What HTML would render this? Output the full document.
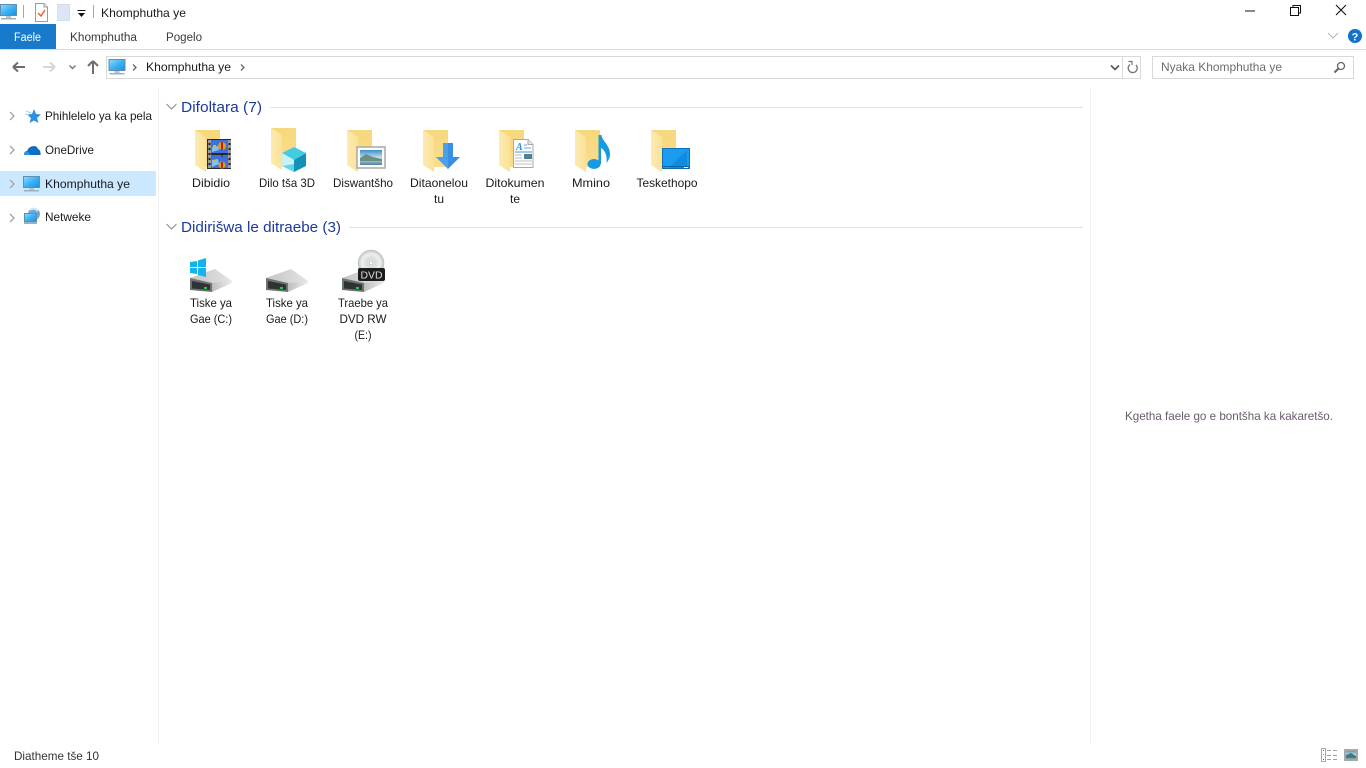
<!DOCTYPE html>
<html><head><meta charset="utf-8"><title>Khomphutha ye</title>
<style>
html,body{margin:0;padding:0;background:#fff;width:1366px;height:768px;overflow:hidden}
svg{display:block;position:absolute;left:0;top:0}
text{font-family:"Liberation Sans",sans-serif;font-size:12px;fill:#1a1a1a}
.c{text-anchor:middle}
.h{font-size:15px;fill:#1c3a9e}
.r{font-size:11.5px;fill:#3a3a3a}
</style></head><body>
<svg width="1366" height="768" viewBox="0 0 1366 768" xmlns="http://www.w3.org/2000/svg">
<defs>
<linearGradient id="fb" x1="0" y1="0" x2="0" y2="1"><stop offset="0" stop-color="#f6d77c"/><stop offset="1" stop-color="#fadf90"/></linearGradient>
<linearGradient id="ff" x1="0" y1="0" x2="1" y2="0"><stop offset="0" stop-color="#fdeab0"/><stop offset="1" stop-color="#fbe29a"/></linearGradient>
<linearGradient id="mon" x1="0" y1="0" x2="1" y2="1"><stop offset="0" stop-color="#8fdcff"/><stop offset=".5" stop-color="#3fb2f2"/><stop offset="1" stop-color="#1a8fe0"/></linearGradient>
<linearGradient id="dt" x1="0" y1="0" x2="1" y2="0"><stop offset="0" stop-color="#c4c4c4"/><stop offset="1" stop-color="#e4e4e4"/></linearGradient>
<linearGradient id="df" x1="0" y1="0" x2="1" y2="0"><stop offset="0" stop-color="#bdbdbd"/><stop offset="1" stop-color="#ededed"/></linearGradient>
<linearGradient id="sky" x1="0" y1="0" x2="0" y2="1"><stop offset="0" stop-color="#3c8fd0"/><stop offset=".55" stop-color="#cfe6ee"/><stop offset="1" stop-color="#4d7f9e"/></linearGradient>
<radialGradient id="cd"><stop offset="0" stop-color="#fff"/><stop offset=".3" stop-color="#d5d8d8"/><stop offset=".7" stop-color="#eef0f0"/><stop offset="1" stop-color="#bfc4c4"/></radialGradient>
<symbol id="folder" width="30" height="44" viewBox="0 0 30 44" overflow="visible">
<path d="M0 0H25V37H11V42L0 35Z" fill="url(#fb)"/>
<path d="M0 0L11 7V42L0 35Z" fill="url(#ff)"/>
</symbol>
<symbol id="pc" width="18" height="17" viewBox="0 0 18 17" overflow="visible">
<rect x=".5" y=".5" width="16" height="11" fill="url(#mon)" stroke="#5e8fb0"/>
<rect x="6" y="12" width="5" height="2" fill="#b3c4d0"/>
<rect x="1" y="14" width="15" height="1.5" fill="#9eb0bc"/>
</symbol>
<symbol id="drive" width="44" height="26" viewBox="0 0 44 26" overflow="visible">
<path d="M0 9L25 0L42 12L22 15Z" fill="url(#dt)"/>
<path d="M22 14L42 12V14L22 23Z" fill="url(#df)"/>
<path d="M0 9L22 14V23L0 21Z" fill="#6f7272"/>
<path d="M2 12L20 15.500V21L2 19.500Z" fill="#2e3334"/>
<rect x="14" y="18" width="3" height="2" fill="#29c24d"/>
</symbol>
</defs>

<!-- Title bar -->
<use href="#pc" x="0" y="4"/>
<rect x="23" y="5" width="1" height="13" fill="#a8a8a8"/>
<path d="M35.500 3.500H44L47.500 7V21.500H35.500Z" fill="#fff" stroke="#9a9a9a"/>
<path d="M44 3.500V7H47.500" fill="#eee" stroke="#9a9a9a"/>
<path d="M38 13L41 16L45 10" fill="none" stroke="#e8622a" stroke-width="1.500"/>
<path d="M57.500 4.500H69.500V20.500H57.500Z" fill="#dce6f4" stroke="#d3dded"/>
<rect x="77.500" y="10" width="8" height="1" fill="#111"/>
<path d="M78 13H85L81.500 17Z" fill="#111"/>
<rect x="93" y="5" width="1" height="13" fill="#a8a8a8"/>
<text x="101" y="17" textLength="85" lengthAdjust="spacingAndGlyphs">Khomphutha ye</text>

<path d="M1245 11H1255" stroke="#111" stroke-width="1"/>
<path d="M1290.500 7.500H1298.500V15.500H1290.500Z M1293 7.500V5.500H1300.500V13H1298.500" fill="none" stroke="#111"/>
<path d="M1336 5L1346 15M1346 5L1336 15" stroke="#111" stroke-width="1.100"/>

<!-- Ribbon -->
<rect x="0" y="24" width="56" height="25" fill="#1979ca"/>
<text x="14" y="41" class="r" style="fill:#fff" textLength="27" lengthAdjust="spacingAndGlyphs">Faele</text>
<text x="70" y="41" class="r" textLength="67" lengthAdjust="spacingAndGlyphs">Khomphutha</text>
<text x="166" y="41" class="r" textLength="36" lengthAdjust="spacingAndGlyphs">Pogelo</text>
<rect x="0" y="49" width="1366" height="1" fill="#dadbdc"/>
<path d="M1328 33L1333 38L1338 33" fill="none" stroke="#b5b5b5"/>
<circle cx="1355" cy="36" r="7" fill="#1273c8"/>
<text x="1355" y="40.500" class="c" style="font-size:11px;font-weight:bold;fill:#fff">?</text>

<!-- Nav -->
<path d="M13 67H25M13 67L18 62.500M13 67L18 71.500" fill="none" stroke="#6d6d6d" stroke-width="2"/>
<path d="M55 67H43M55 67L50 62.500M55 67L50 71.500" fill="none" stroke="#d6d6d6" stroke-width="2"/>
<path d="M69.500 65.500L72.500 68.500L75.500 65.500" fill="none" stroke="#777" stroke-width="1.500"/>
<path d="M93 74V61M93 61L88 66M93 61L98 66" fill="none" stroke="#6d6d6d" stroke-width="2"/>

<rect x="106.500" y="56.500" width="1034" height="22" fill="#fff" stroke="#d9d9d9"/>
<rect x="1122" y="57" width="1" height="21" fill="#d9d9d9"/>
<use href="#pc" x="108.500" y="59"/>
<path d="M133 64.500L136 67.500L133 70.500" fill="none" stroke="#666" stroke-width="1.300"/>
<text x="146" y="71" textLength="85" lengthAdjust="spacingAndGlyphs">Khomphutha ye</text>
<path d="M241 64.500L244 67.500L241 70.500" fill="none" stroke="#666" stroke-width="1.300"/>
<path d="M1111 65.500L1115 69.500L1119 65.500" fill="none" stroke="#555" stroke-width="1.600"/>
<path d="M1136 65A4.500 4.500 0 1 1 1130 64.500" fill="none" stroke="#777" stroke-width="1.300"/>
<path d="M1128.500 61.500H1132V65" fill="none" stroke="#777" stroke-width="1.200"/>

<rect x="1152.500" y="56.500" width="201" height="22" fill="#fff" stroke="#d9d9d9"/>
<text x="1161" y="71" style="fill:#6d6d6d" textLength="121" lengthAdjust="spacingAndGlyphs">Nyaka Khomphutha ye</text>
<circle cx="1341" cy="66" r="3.500" fill="none" stroke="#666" stroke-width="1.300"/>
<path d="M1338.500 68.500L1334.500 72.500" stroke="#666" stroke-width="2"/>

<!-- Side panes -->
<rect x="0" y="171" width="156" height="25" fill="#cce8ff"/>
<rect x="158" y="88" width="1" height="657" fill="#f2f2f2"/>
<rect x="1090" y="88" width="1" height="657" fill="#f2f2f2"/>

<g fill="none" stroke="#a6a6a6" stroke-width="1.400">
<path d="M10 112L14 116L10 120"/><path d="M10 146L14 150L10 154"/><path d="M10 180L14 184L10 188"/><path d="M10 214L14 218L10 222"/>
</g>
<path d="M34 109L36 114L41 114.500L37 118L38.500 123L34 120.500L29.500 123L31 118L27 114.500L32 114Z" fill="#2a90e0"/>
<path d="M26 111L31 113M25 114L29 115" stroke="#9ed2f4" stroke-width="1"/>
<text x="45" y="120" textLength="107" lengthAdjust="spacingAndGlyphs">Phihlelelo ya ka pela</text>
<path d="M24 155Q24 151 27 151Q29 146 34 146Q37 146 38 149Q41 150 40.500 155Z" fill="#0d6fc4"/>
<path d="M24 155Q24 151 27 151L31 155Z" fill="#2a95e6"/>
<text x="45" y="154" textLength="49" lengthAdjust="spacingAndGlyphs">OneDrive</text>
<use href="#pc" x="23" y="176"/>
<text x="45" y="188" textLength="85" lengthAdjust="spacingAndGlyphs">Khomphutha ye</text>
<circle cx="34" cy="214" r="6" fill="#6ea8d8"/>
<path d="M30 210Q34 207 38 211" stroke="#cfe4f4" stroke-width="2" fill="none"/>
<rect x="24.500" y="213.500" width="12" height="8" fill="url(#mon)" stroke="#5e8fb0"/>
<rect x="24" y="222" width="13" height="2" fill="#9eb0bc"/>
<text x="45" y="221" textLength="46" lengthAdjust="spacingAndGlyphs">Netweke</text>

<!-- Section headers -->
<path d="M166.500 104L171.500 109L176.500 104" fill="none" stroke="#8a8a8a"/>
<text x="181" y="112" class="h" textLength="81" lengthAdjust="spacingAndGlyphs">Difoltara (7)</text>
<rect x="270" y="107" width="813" height="1" fill="#e3e3e3"/>
<path d="M166.500 224L171.500 229L176.500 224" fill="none" stroke="#8a8a8a"/>
<text x="181" y="232" class="h" textLength="160" lengthAdjust="spacingAndGlyphs">Didirišwa le ditraebe (3)</text>
<rect x="349" y="227" width="734" height="1" fill="#e3e3e3"/>

<!-- Folders -->
<use href="#folder" x="195" y="130"/>
<use href="#folder" x="271" y="128"/>
<use href="#folder" x="347" y="130"/>
<use href="#folder" x="423" y="130"/>
<use href="#folder" x="499" y="130"/>
<use href="#folder" x="575" y="130"/>
<use href="#folder" x="651" y="130"/>

<!-- Video -->
<rect x="207" y="139" width="24" height="30" fill="#2a2a2a"/>
<rect x="208" y="140" width="3" height="28" fill="#9a9a9a"/>
<rect x="228" y="140" width="3" height="28" fill="#9a9a9a"/>
<g fill="#222"><rect x="208.500" y="143" width="2" height="2"/><rect x="208.500" y="148" width="2" height="2"/><rect x="208.500" y="153" width="2" height="2"/><rect x="208.500" y="158" width="2" height="2"/><rect x="208.500" y="163" width="2" height="2"/><rect x="228.500" y="143" width="2" height="2"/><rect x="228.500" y="148" width="2" height="2"/><rect x="228.500" y="153" width="2" height="2"/><rect x="228.500" y="158" width="2" height="2"/><rect x="228.500" y="163" width="2" height="2"/></g>
<rect x="211" y="140" width="17" height="13" fill="#3f6fd8"/>
<rect x="211" y="155" width="17" height="13" fill="#3f6fd8"/>
<circle cx="222" cy="146" r="4" fill="#d8a020"/><rect x="221" y="142" width="2" height="8" fill="#c02020"/>
<path d="M212 147L218 146L219 150L212 152Z" fill="#7fc4ee"/><rect x="213" y="145" width="3" height="2" fill="#e8b030"/>
<path d="M212 160L218 159L219 164L212 167Z" fill="#7fc4ee"/><rect x="213" y="160" width="3" height="2" fill="#e8b030"/>
<circle cx="222" cy="165" r="3.500" fill="#d8a020"/><rect x="221" y="162" width="2" height="6" fill="#c02020"/>
<path d="M221 153L223 153L222 158Z" fill="#222"/>

<!-- 3D -->
<path d="M294 147L306 153L294 160L282 153Z" fill="#45cbe0"/>
<path d="M282 153L294 160V172L282 166Z" fill="#c9f1f5"/>
<path d="M294 160L306 153V166L294 172Z" fill="#1391b8"/>
<path d="M282 166L294 172V164Z" fill="#5fd8e6"/>

<!-- Picture -->
<rect x="357" y="147" width="28" height="21" fill="#fff" stroke="#a8a8a8" stroke-width="1.500"/>
<rect x="360" y="150" width="22" height="15" fill="url(#sky)"/>
<path d="M360 158L366 154L373 157L382 159V161H360Z" fill="#6a9080"/>

<!-- Download -->
<path d="M443 143H453V157H460L448 169L436 157H443Z" fill="#3a8fe2"/>
<path d="M443 143H448V169L436 157H443Z" fill="#4ba0ee"/>

<!-- Document -->
<path d="M513.500 139.500H528L533 144.500V167.500H513.500Z" fill="#fff" stroke="#a8a8a8"/>
<path d="M528 139.500V144.500H533" fill="#e6e6e6" stroke="#a8a8a8"/>
<text x="516" y="150" style="font:italic bold 10px 'Liberation Serif',serif;fill:#2a8fd8">A</text>
<path d="M524 145H527M524 148H531" stroke="#5aa8e0"/>
<path d="M515 152H532" stroke="#3a9ae0"/>
<rect x="524" y="154" width="8" height="5" fill="#547f8e"/>
<path d="M515 155H522M515 158H522M515 161H532M515 164H532" stroke="#bdbdbd"/>

<!-- Music -->
<ellipse cx="594" cy="164" rx="6.500" ry="5" fill="#179ae0"/>
<path d="M598.500 164V135H601.500C602 141 610 145 610 154C610 158 608 161 606.500 163C607.500 156 605 150 601 148V164Z" fill="#179ae0"/>

<!-- Desktop -->
<rect x="662.500" y="148.500" width="27" height="20" fill="#1a9cf0" stroke="#0f6fb4"/>
<path d="M669 168L687 150V168Z" fill="#0f8be0"/>
<path d="M663 166.500H689" stroke="#0b65a8"/>
<rect x="684" y="167" width="4" height="1" fill="#fff"/>

<!-- Folder labels -->
<text x="211" y="187" class="c" textLength="38" lengthAdjust="spacingAndGlyphs">Dibidio</text>
<text x="287" y="187" class="c" textLength="56" lengthAdjust="spacingAndGlyphs">Dilo tša 3D</text>
<text x="363" y="187" class="c" textLength="60" lengthAdjust="spacingAndGlyphs">Diswantšho</text>
<text x="439" y="187" class="c" textLength="58" lengthAdjust="spacingAndGlyphs">Ditaonelou</text>
<text x="439" y="203" class="c">tu</text>
<text x="515" y="187" class="c" textLength="59" lengthAdjust="spacingAndGlyphs">Ditokumen</text>
<text x="515" y="203" class="c">te</text>
<text x="591" y="187" class="c" textLength="38" lengthAdjust="spacingAndGlyphs">Mmino</text>
<text x="667" y="187" class="c" textLength="61" lengthAdjust="spacingAndGlyphs">Teskethopo</text>

<!-- Drives -->
<use href="#drive" x="190" y="269"/>
<g fill="#12b3ee">
<path d="M190 262L197 261V267H190Z"/><path d="M198 260.500L206 258V267H198Z"/><path d="M190 268H197V274L190 273Z"/><path d="M198 268H206V277L198 275Z"/>
</g>
<use href="#drive" x="266" y="269"/>
<use href="#drive" x="342" y="269"/>
<circle cx="371" cy="263" r="13" fill="url(#cd)" stroke="#b5baba" stroke-width=".5"/>
<circle cx="371" cy="263" r="2" fill="#fff" stroke="#999" stroke-width=".5"/>
<rect x="358" y="268" width="27" height="13" rx="2" fill="#1c1c1c"/>
<text x="371.500" y="278.500" class="c" style="font-size:10.500px;fill:#ddd" textLength="22" lengthAdjust="spacingAndGlyphs">DVD</text>

<text x="211" y="307" class="c" textLength="42" lengthAdjust="spacingAndGlyphs">Tiske ya</text>
<text x="211" y="323" class="c" textLength="42" lengthAdjust="spacingAndGlyphs">Gae (C:)</text>
<text x="287" y="307" class="c" textLength="42" lengthAdjust="spacingAndGlyphs">Tiske ya</text>
<text x="287" y="323" class="c" textLength="42" lengthAdjust="spacingAndGlyphs">Gae (D:)</text>
<text x="363" y="307" class="c" textLength="50" lengthAdjust="spacingAndGlyphs">Traebe ya</text>
<text x="363" y="323" class="c" textLength="47" lengthAdjust="spacingAndGlyphs">DVD RW</text>
<text x="363" y="339" class="c" textLength="17" lengthAdjust="spacingAndGlyphs">(E:)</text>

<!-- Preview message -->
<text x="1125" y="420" style="fill:#6b5a6e" textLength="208" lengthAdjust="spacingAndGlyphs">Kgetha faele go e bontšha ka kakaretšo.</text>

<!-- Status -->
<text x="14" y="760" style="fill:#333" textLength="85" lengthAdjust="spacingAndGlyphs">Diatheme tše 10</text>
<rect x="1321.500" y="748.500" width="4" height="13" fill="#fff" stroke="#a8a8a8"/>
<rect x="1323" y="750" width="1" height="1" fill="#777"/><rect x="1323" y="754" width="1" height="1" fill="#6a9ad0"/><rect x="1323" y="759" width="1" height="1" fill="#c03030"/>
<path d="M1327 750.500H1331M1333 750.500H1337M1327 755.500H1331M1333 755.500H1337M1327 759.500H1331M1333 759.500H1337" stroke="#a0a0a0"/>
<rect x="1345" y="750" width="12" height="10" fill="url(#sky)" stroke="#a8a8a8" stroke-width="2"/>
<path d="M1346 755L1351 753L1356 756V758H1346Z" fill="#4b7a68"/>
</svg>
</body></html>
